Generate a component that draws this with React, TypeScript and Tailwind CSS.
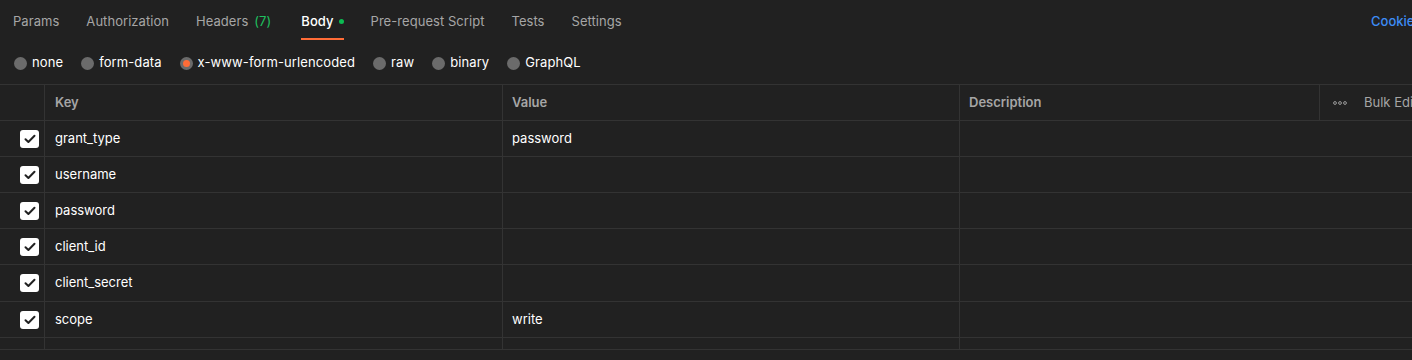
import React from "react";

const tabs = [
  { label: "Params" },
  { label: "Authorization" },
  { label: "Headers", count: "(7)" },
  { label: "Body", active: true },
  { label: "Pre-request Script" },
  { label: "Tests" },
  { label: "Settings" },
];

const radios = [
  { label: "none" },
  { label: "form-data" },
  { label: "x-www-form-urlencoded", selected: true },
  { label: "raw" },
  { label: "binary" },
  { label: "GraphQL" },
];

const rows = [
  { key: "grant_type", value: "password", h: "h-[36px]" },
  { key: "username", value: "", h: "h-[36px]" },
  { key: "password", value: "", h: "h-[36px]" },
  { key: "client_id", value: "", h: "h-[36px]" },
  { key: "client_secret", value: "", h: "h-[37px]" },
  { key: "scope", value: "write", h: "h-[36px]" },
];

function Check() {
  return (
    <div className="w-[19px] h-[18px] rounded-[3px] bg-white flex items-center justify-center">
      <svg width="12" height="10" viewBox="0 0 12 10" fill="none">
        <path d="M1.5 5.2 L4.4 8 L10.5 1.8" stroke="#212121" strokeWidth="2" strokeLinecap="round" strokeLinejoin="round" />
      </svg>
    </div>
  );
}

export default function App() {
  return (
    <div
      className="w-[1412px] h-[360px] bg-[#212121] overflow-hidden text-[13px] text-[#f0f0f0]"
      style={{ fontFamily: "Inter, 'Noto Sans', sans-serif" }}
    >
      {/* Tabs */}
      <div className="h-[40px] flex items-stretch pl-[13px] gap-[27px]">
        {tabs.map((t, i) => (
          <div
            key={i}
            className={`relative h-full flex items-center pt-[3px] tracking-[0.05px] ${t.active ? "ml-[3px]" : ""}`}
          >
            <span className={t.active ? "text-white font-medium" : "text-[#a6a6a6]"}>{t.label}</span>
            {t.count && <span className="text-[#1fc05f] ml-[6px]">{t.count}</span>}
            {t.active && <span className="ml-[5px] w-[5px] h-[5px] rounded-full bg-[#0cbb52]" />}
            {t.active && <span className="absolute left-0 right-0 bottom-[0px] h-[2px] bg-[#ff6c37]" />}
          </div>
        ))}
        <div className="flex-1" />
        <div className="flex items-center pt-[3px] whitespace-nowrap w-[41px] overflow-hidden">
          <span className="text-[#3d8cf5] font-medium">Cookies</span>
        </div>
      </div>

      {/* Radios */}
      <div className="h-[44px] flex items-center pl-[14px] pt-[2px] gap-[18px]">
        {radios.map((r, i) => (
          <div key={i} className="flex items-center gap-[5px]">
            <div className="w-[13px] h-[13px] rounded-full bg-[#6b6b6b] flex items-center justify-center">
              {r.selected && <div className="w-[7px] h-[7px] rounded-full bg-[#ff6c37]" />}
            </div>
            <span className="text-white tracking-[0.1px]">{r.label}</span>
          </div>
        ))}
      </div>

      {/* Table */}
      <div className="border-t border-[#333333] w-[1480px]">
        <div className="flex h-[36px] border-b border-[#333333] text-[#a6a6a6] font-semibold">
          <div className="w-[45px] border-r border-[#333333]" />
          <div className="w-[458px] border-r border-[#333333] flex items-center pl-[10px] pt-[1px]">Key</div>
          <div className="w-[457px] border-r border-[#333333] flex items-center pl-[9px] pt-[1px]">Value</div>
          <div className="w-[360px] border-r border-[#333333] flex items-center pl-[9px] pt-[1px]">Description</div>
          <div className="flex items-center pl-[13px] gap-[17px] font-normal">
            <svg width="14" height="4" viewBox="0 0 14 4" fill="none">
              <circle cx="2" cy="2" r="1.4" stroke="#9a9a9a" strokeWidth="1" />
              <circle cx="7" cy="2" r="1.4" stroke="#9a9a9a" strokeWidth="1" />
              <circle cx="12" cy="2" r="1.4" stroke="#9a9a9a" strokeWidth="1" />
            </svg>
            <span className="text-[#a6a6a6] whitespace-nowrap">Bulk Edit</span>
          </div>
        </div>
        {rows.map((r, i) => (
          <div key={i} className={`flex ${r.h} border-b border-[#333333]`}>
            <div className="w-[45px] border-r border-[#333333] flex items-center pl-[20px]">
              <Check />
            </div>
            <div className="w-[458px] border-r border-[#333333] flex items-center pl-[10px] text-white">{r.key}</div>
            <div className="w-[457px] border-r border-[#333333] flex items-center pl-[9px] text-white">{r.value}</div>
            <div className="flex-1" />
          </div>
        ))}
        <div className="flex h-[12px] border-b border-[#333333]">
          <div className="w-[45px] border-r border-[#333333]" />
          <div className="w-[458px] border-r border-[#333333]" />
          <div className="w-[457px] border-r border-[#333333]" />
          <div className="flex-1" />
        </div>
      </div>
    </div>
  );
}
